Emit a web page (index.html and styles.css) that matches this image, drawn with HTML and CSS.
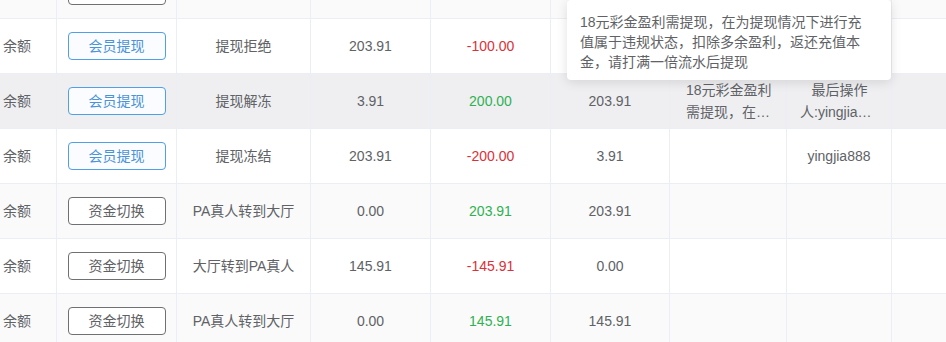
FILE: index.html
```html
<!DOCTYPE html>
<html lang="zh-CN">
<head>
<meta charset="utf-8">
<title>资金记录</title>
<link rel="stylesheet" href="styles.css">
</head>
<body>
<div class="viewport">
  <table class="ledger">
    <colgroup>
      <col class="c1"><col class="c2"><col class="c3"><col class="c4"><col class="c5"><col class="c6"><col class="c7"><col class="c8"><col class="c9">
    </colgroup>
    <tbody>
      <tr class="striped">
        <td class="first">余额</td>
        <td><button class="btn btn-gray">资金切换</button></td>
        <td>大厅转到PA真人</td>
        <td>203.91</td>
        <td class="neg">-0.00</td>
        <td>203.91</td>
        <td></td><td></td><td></td>
      </tr>
      <tr>
        <td class="first">余额</td>
        <td><button class="btn btn-blue">会员提现</button></td>
        <td>提现拒绝</td>
        <td>203.91</td>
        <td class="neg">-100.00</td>
        <td>103.91</td>
        <td></td><td></td><td></td>
      </tr>
      <tr class="hover">
        <td class="first">余额</td>
        <td><button class="btn btn-blue">会员提现</button></td>
        <td>提现解冻</td>
        <td>3.91</td>
        <td class="pos">200.00</td>
        <td>203.91</td>
        <td class="remark"><div class="clamp">18元彩金盈利需提现，在为提现情况下进行充值属于违规状态，扣除多余盈利，返还充值本金，请打满一倍流水后提现</div></td>
        <td class="op"><div class="clamp center">最后操作人:yingjia888</div></td>
        <td></td>
      </tr>
      <tr>
        <td class="first">余额</td>
        <td><button class="btn btn-blue">会员提现</button></td>
        <td>提现冻结</td>
        <td>203.91</td>
        <td class="neg">-200.00</td>
        <td>3.91</td>
        <td></td>
        <td>yingjia888</td>
        <td></td>
      </tr>
      <tr class="striped">
        <td class="first">余额</td>
        <td><button class="btn btn-gray">资金切换</button></td>
        <td>PA真人转到大厅</td>
        <td>0.00</td>
        <td class="pos">203.91</td>
        <td>203.91</td>
        <td></td><td></td><td></td>
      </tr>
      <tr>
        <td class="first">余额</td>
        <td><button class="btn btn-gray">资金切换</button></td>
        <td>大厅转到PA真人</td>
        <td>145.91</td>
        <td class="neg">-145.91</td>
        <td>0.00</td>
        <td></td><td></td><td></td>
      </tr>
      <tr class="striped">
        <td class="first">余额</td>
        <td><button class="btn btn-gray">资金切换</button></td>
        <td>PA真人转到大厅</td>
        <td>0.00</td>
        <td class="pos">145.91</td>
        <td>145.91</td>
        <td></td><td></td><td></td>
      </tr>
    </tbody>
  </table>
  <div class="popover">18元彩金盈利需提现，在为提现情况下进行充值属于违规状态，扣除多余盈利，返还充值本金，请打满一倍流水后提现</div>
</div>
</body>
</html>
```

FILE: styles.css
```css
html, body {
  margin: 0;
  padding: 0;
  background: #ffffff;
}

body {
  font-family: "Liberation Sans", "Noto Sans CJK SC", sans-serif;
  font-size: 14px;
  color: #606266;
}

.viewport {
  position: relative;
  width: 946px;
  height: 342px;
  overflow: hidden;
}

.ledger {
  margin-top: -36px;
  border-collapse: separate;
  border-spacing: 0;
  table-layout: fixed;
  width: 1012px;
}

.c1 { width: 57px; }
.c2 { width: 120px; }
.c3 { width: 134px; }
.c4 { width: 120px; }
.c5 { width: 120px; }
.c6 { width: 119px; }
.c7 { width: 117px; }
.c8 { width: 105px; }
.c9 { width: 120px; }

.ledger tr {
  height: 55px;
}

.ledger td {
  padding: 0 10px;
  border-right: 1px solid #ebeef5;
  border-bottom: 1px solid #ebeef5;
  text-align: center;
  vertical-align: middle;
  white-space: nowrap;
  line-height: 22px;
  overflow: hidden;
}

.ledger td.first {
  padding: 0 0 0 3px;
  text-align: left;
}

.ledger tr.striped td { background: #fafafa; }
.ledger tr.hover td { background: #efeff2; }

.neg { color: #dc3039; }
.pos { color: #2fb152; }

.btn {
  box-sizing: border-box;
  height: 28px;
  width: 98px;
  padding: 0;
  border-radius: 4px;
  font-family: inherit;
  font-size: 14px;
  line-height: 26px;
  cursor: pointer;
}

.btn-blue {
  border: 1px solid #519fe6;
  background: #fafcff;
  color: #4a93d8;
}

.btn-gray {
  border: 1px solid #6f7072;
  background: #ffffff;
  color: #606266;
}

.ledger td.remark {
  padding: 0 8px 0 16px;
  white-space: normal;
  text-align: left;
}

.ledger td.op {
  padding: 0 12px 0 13px;
  white-space: normal;
}

.clamp {
  display: -webkit-box;
  -webkit-box-orient: vertical;
  -webkit-line-clamp: 2;
  overflow: hidden;
  text-overflow: ellipsis;
  line-height: 22px;
}

.clamp.center { text-align: center; }

.popover {
  position: absolute;
  left: 567px;
  top: 0;
  width: 288px;
  padding: 12px 23px 8px 13px;
  background: #ffffff;
  border-radius: 4px;
  box-shadow: 0 2px 12px rgba(0, 0, 0, 0.12);
  line-height: 20px;
  color: #606266;
  white-space: normal;
}
```
